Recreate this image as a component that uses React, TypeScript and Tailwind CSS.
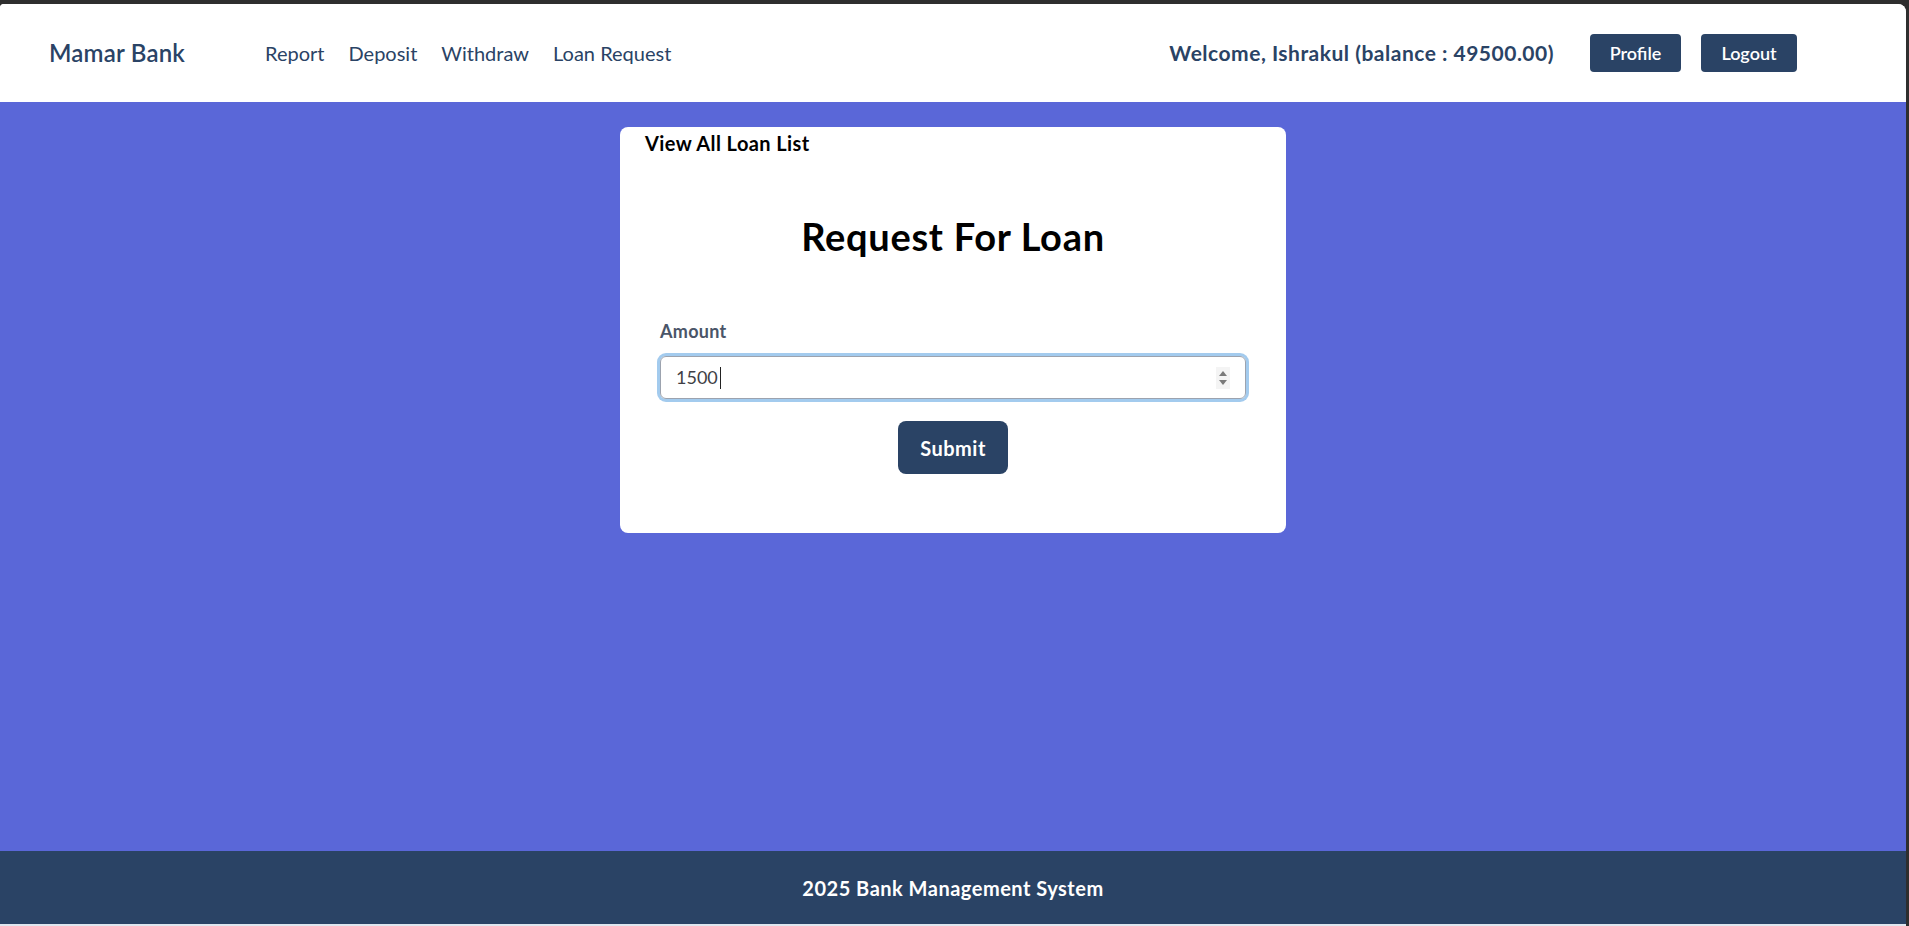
import React from "react";

const links = ["Report", "Deposit", "Withdraw", "Loan Request"];

function Navbar() {
  return (
    <header className="h-[98px] shrink-0 bg-white flex items-center pl-[49px] pr-[109px]">
      <a className="text-[24px] font-semibold tracking-[0.2px] text-[#2a4365] leading-none">Mamar Bank</a>
      <nav className="ml-[80px] flex items-center gap-[24px]">
        {links.map((l) => (
          <a key={l} className="text-[20px] text-[#2a4365] leading-none">
            {l}
          </a>
        ))}
      </nav>
      <div className="ml-auto flex items-center">
        <span className="text-[21px] font-bold tracking-[0.5px] text-[#2a4365]">
          Welcome, Ishrakul (balance : 49500.00)
        </span>
        <button className="ml-[36px] w-[91px] h-[38px] rounded bg-[#2a4365] text-white text-[18px] font-semibold">
          Profile
        </button>
        <button className="ml-[20px] w-[96px] h-[38px] rounded bg-[#2a4365] text-white text-[18px] font-semibold">
          Logout
        </button>
      </div>
    </header>
  );
}

function Spinner() {
  return (
    <svg width="14" height="22" viewBox="0 0 14 22" className="shrink-0">
      <rect x="0" y="0" width="14" height="22" fill="#f4f4f4" />
      <path d="M7 4 L11 9 L3 9 Z" fill="#7a7a7a" />
      <path d="M7 18 L11 13 L3 13 Z" fill="#7a7a7a" />
    </svg>
  );
}

function LoanCard() {
  return (
    <div className="mx-auto mt-[25px] w-[666px] bg-white rounded-lg pt-[3px] pb-[59px]">
      <a className="block pl-[25px] text-[20px] font-bold tracking-[0.4px] text-black leading-[27px]">
        View All Loan List
      </a>
      <h1 className="mt-[56px] text-center text-[38px] font-bold tracking-[0.7px] text-black leading-[46px]">
        Request For Loan
      </h1>
      <form className="mt-[59px] px-[40px]" onSubmit={(e) => e.preventDefault()}>
        <label className="block text-[18px] font-bold tracking-[0.3px] text-[#4a5568] leading-[27px] mb-[11px]">
          Amount
        </label>
        <div className="h-[43px] flex items-center border border-[#9ca3af] rounded-md shadow-[0_0_0_3px_#a3cbee] pl-[15px] pr-[15px]">
          <input
            type="text"
            defaultValue="1500"
            className="w-[44px] bg-transparent outline-none text-[18px] text-[#3f3f46]"
          />
          <span className="w-px h-[22px] bg-[#222]" />
          <span className="flex-1" />
          <Spinner />
        </div>
        <div className="mt-[22px] flex justify-center">
          <button className="w-[110px] h-[53px] rounded-lg bg-[#2a4365] text-white text-[20px] font-bold tracking-[0.5px]">
            Submit
          </button>
        </div>
      </form>
    </div>
  );
}

export default function App() {
  return (
    <div className="h-[926px] bg-[#2e2e2e] pt-[4px] pr-[3px] font-['Lato',sans-serif]">
      <div className="h-full flex flex-col rounded-tl-[4px] rounded-tr-[8px] overflow-hidden bg-white">
        <Navbar />
        <main className="flex-1 bg-[#5a67d8]">
          <LoanCard />
        </main>
        <footer className="h-[73px] shrink-0 bg-[#2a4365] flex items-center justify-center">
          <p className="text-[20px] font-bold tracking-[0.5px] text-white">2025 Bank Management System</p>
        </footer>
        <div className="h-[2px] shrink-0 bg-[#dfe6ef]" />
      </div>
    </div>
  );
}
